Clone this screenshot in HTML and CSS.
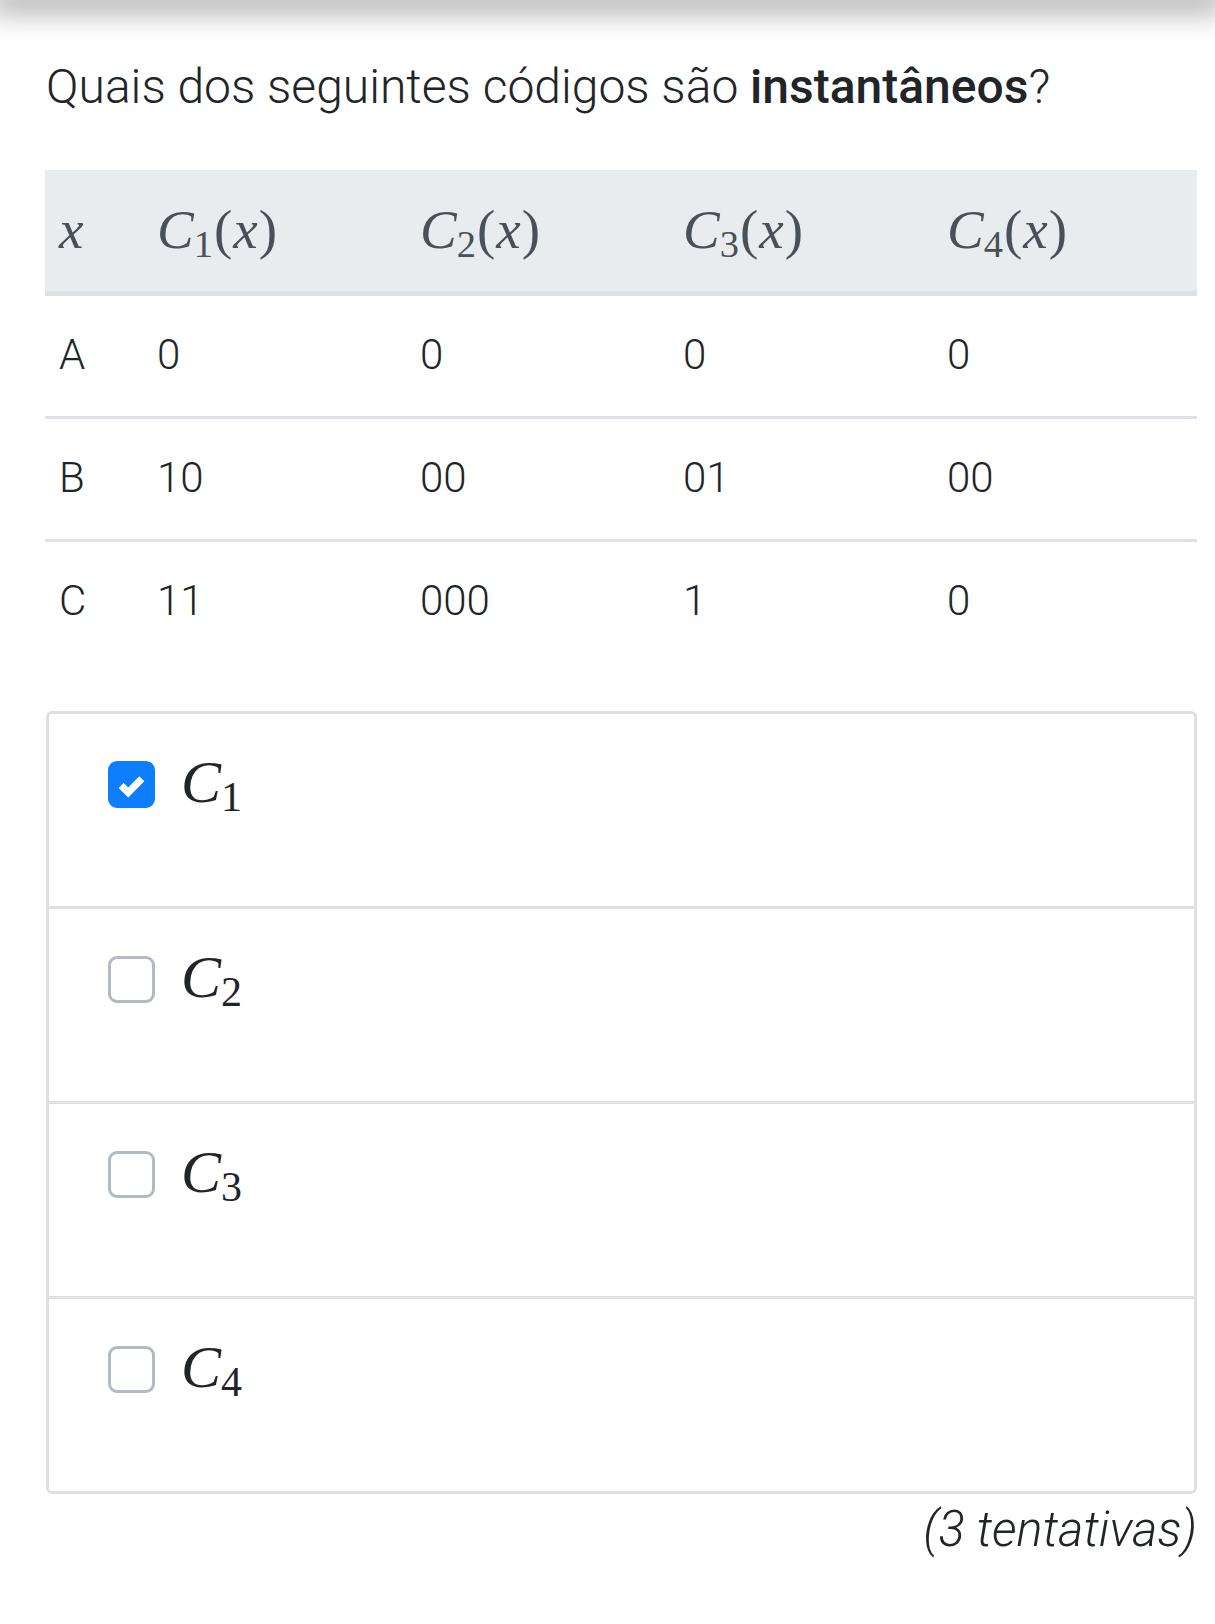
FILE: index.html
```html
<!DOCTYPE html>
<html lang="pt">
<head>
<meta charset="utf-8">
<title>Quiz</title>
<link rel="stylesheet" href="styles.css">
</head>
<body>
<div class="topshadow"></div>
<main class="page">
  <h1 class="question">Quais dos seguintes códigos são <strong>instantâneos</strong>?</h1>

  <div class="codes">
    <div class="row head">
      <div class="cell"><span class="math"><i>x</i></span></div>
      <div class="cell"><span class="math"><i>C</i><sub>1</sub>(<i>x</i>)</span></div>
      <div class="cell"><span class="math"><i>C</i><sub>2</sub>(<i>x</i>)</span></div>
      <div class="cell"><span class="math"><i>C</i><sub>3</sub>(<i>x</i>)</span></div>
      <div class="cell"><span class="math"><i>C</i><sub>4</sub>(<i>x</i>)</span></div>
    </div>
    <div class="row">
      <div class="cell">A</div><div class="cell">0</div><div class="cell">0</div><div class="cell">0</div><div class="cell">0</div>
    </div>
    <div class="row">
      <div class="cell">B</div><div class="cell">10</div><div class="cell">00</div><div class="cell">01</div><div class="cell">00</div>
    </div>
    <div class="row last">
      <div class="cell">C</div><div class="cell">11</div><div class="cell">000</div><div class="cell">1</div><div class="cell">0</div>
    </div>
  </div>

  <div class="options">
    <label class="option">
      <span class="box checked"><svg viewBox="0 0 20 20" width="47" height="47"><path d="M5.6 10.4l3 3 5.8-5.8" fill="none" stroke="#fff" stroke-width="3"/></svg></span>
      <span class="label math"><i>C</i><sub>1</sub></span>
    </label>
    <label class="option">
      <span class="box"></span>
      <span class="label math"><i>C</i><sub>2</sub></span>
    </label>
    <label class="option">
      <span class="box"></span>
      <span class="label math"><i>C</i><sub>3</sub></span>
    </label>
    <label class="option">
      <span class="box"></span>
      <span class="label math"><i>C</i><sub>4</sub></span>
    </label>
  </div>

  <p class="attempts">(3 tentativas)</p>
</main>
</body>
</html>
```

FILE: styles.css
```css
html, body {
  margin: 0;
  padding: 0;
  background: #ffffff;
}

body {
  font-family: "Roboto Light", Roboto, "Liberation Sans", sans-serif;
  font-weight: 300;
  color: #212529;
  overflow: hidden;
}

.topshadow {
  height: 0;
  box-shadow: 0 0 30px 10px rgba(0, 0, 0, 0.42);
}

.page {
  width: 1152px;
  margin-left: 45px;
}

.question {
  margin: 58px 0 0 1px;
  font-size: 48px;
  line-height: 1.2;
  font-weight: 300;
}

.question strong {
  font-family: Roboto, "Liberation Sans", sans-serif;
  font-weight: 500;
}

.codes {
  margin-top: 54px;
}

.row {
  display: grid;
  grid-template-columns: 98px 263px 263px 264px 264px;
  height: 120px;
  align-items: center;
  border-bottom: 3px solid #dee2e6;
  font-size: 42px;
  line-height: 1.2;
}

.row.head {
  height: 121px;
  background: #e9ecef;
  border-bottom: 5px solid #dde1e5;
  color: #495057;
}

.row.last {
  border-bottom: none;
}

.cell {
  padding-left: 14px;
  white-space: nowrap;
}

.math {
  font-family: "Liberation Serif", "DejaVu Serif", serif;
  font-weight: 400;
  font-size: 55px;
  line-height: 1.2;
  letter-spacing: 1px;
}

.math i {
  font-style: italic;
}

.math sub {
  font-size: 0.7em;
  vertical-align: -0.22em;
  line-height: 0;
  margin-left: -1px;
}

.options {
  margin-top: 49px;
  margin-left: 1px;
  border: 3px solid #e0e0e0;
  border-radius: 6px;
}

.option {
  display: flex;
  align-items: flex-start;
  gap: 26px;
  height: 195px;
  box-sizing: border-box;
  padding: 47px 0 0 59px;
  border-bottom: 3px solid #e0e0e0;
}

.option:last-child {
  height: 192px;
  border-bottom: none;
}

.box {
  width: 47px;
  height: 47px;
  box-sizing: border-box;
  border: 3px solid #b3bbc2;
  border-radius: 9px;
  background: #ffffff;
  flex: none;
  display: flex;
  align-items: center;
  justify-content: center;
}

.box.checked {
  background: #0d7efd;
  border-color: #0d7efd;
}

.box svg {
  display: block;
  flex: none;
}

.label {
  font-size: 60px;
  line-height: 1;
  margin-top: -9px;
  color: #212529;
}

.attempts {
  margin: 7px 0 0;
  text-align: right;
  font-size: 49px;
  line-height: 1.2;
  font-style: italic;
  font-weight: 300;
}
```
